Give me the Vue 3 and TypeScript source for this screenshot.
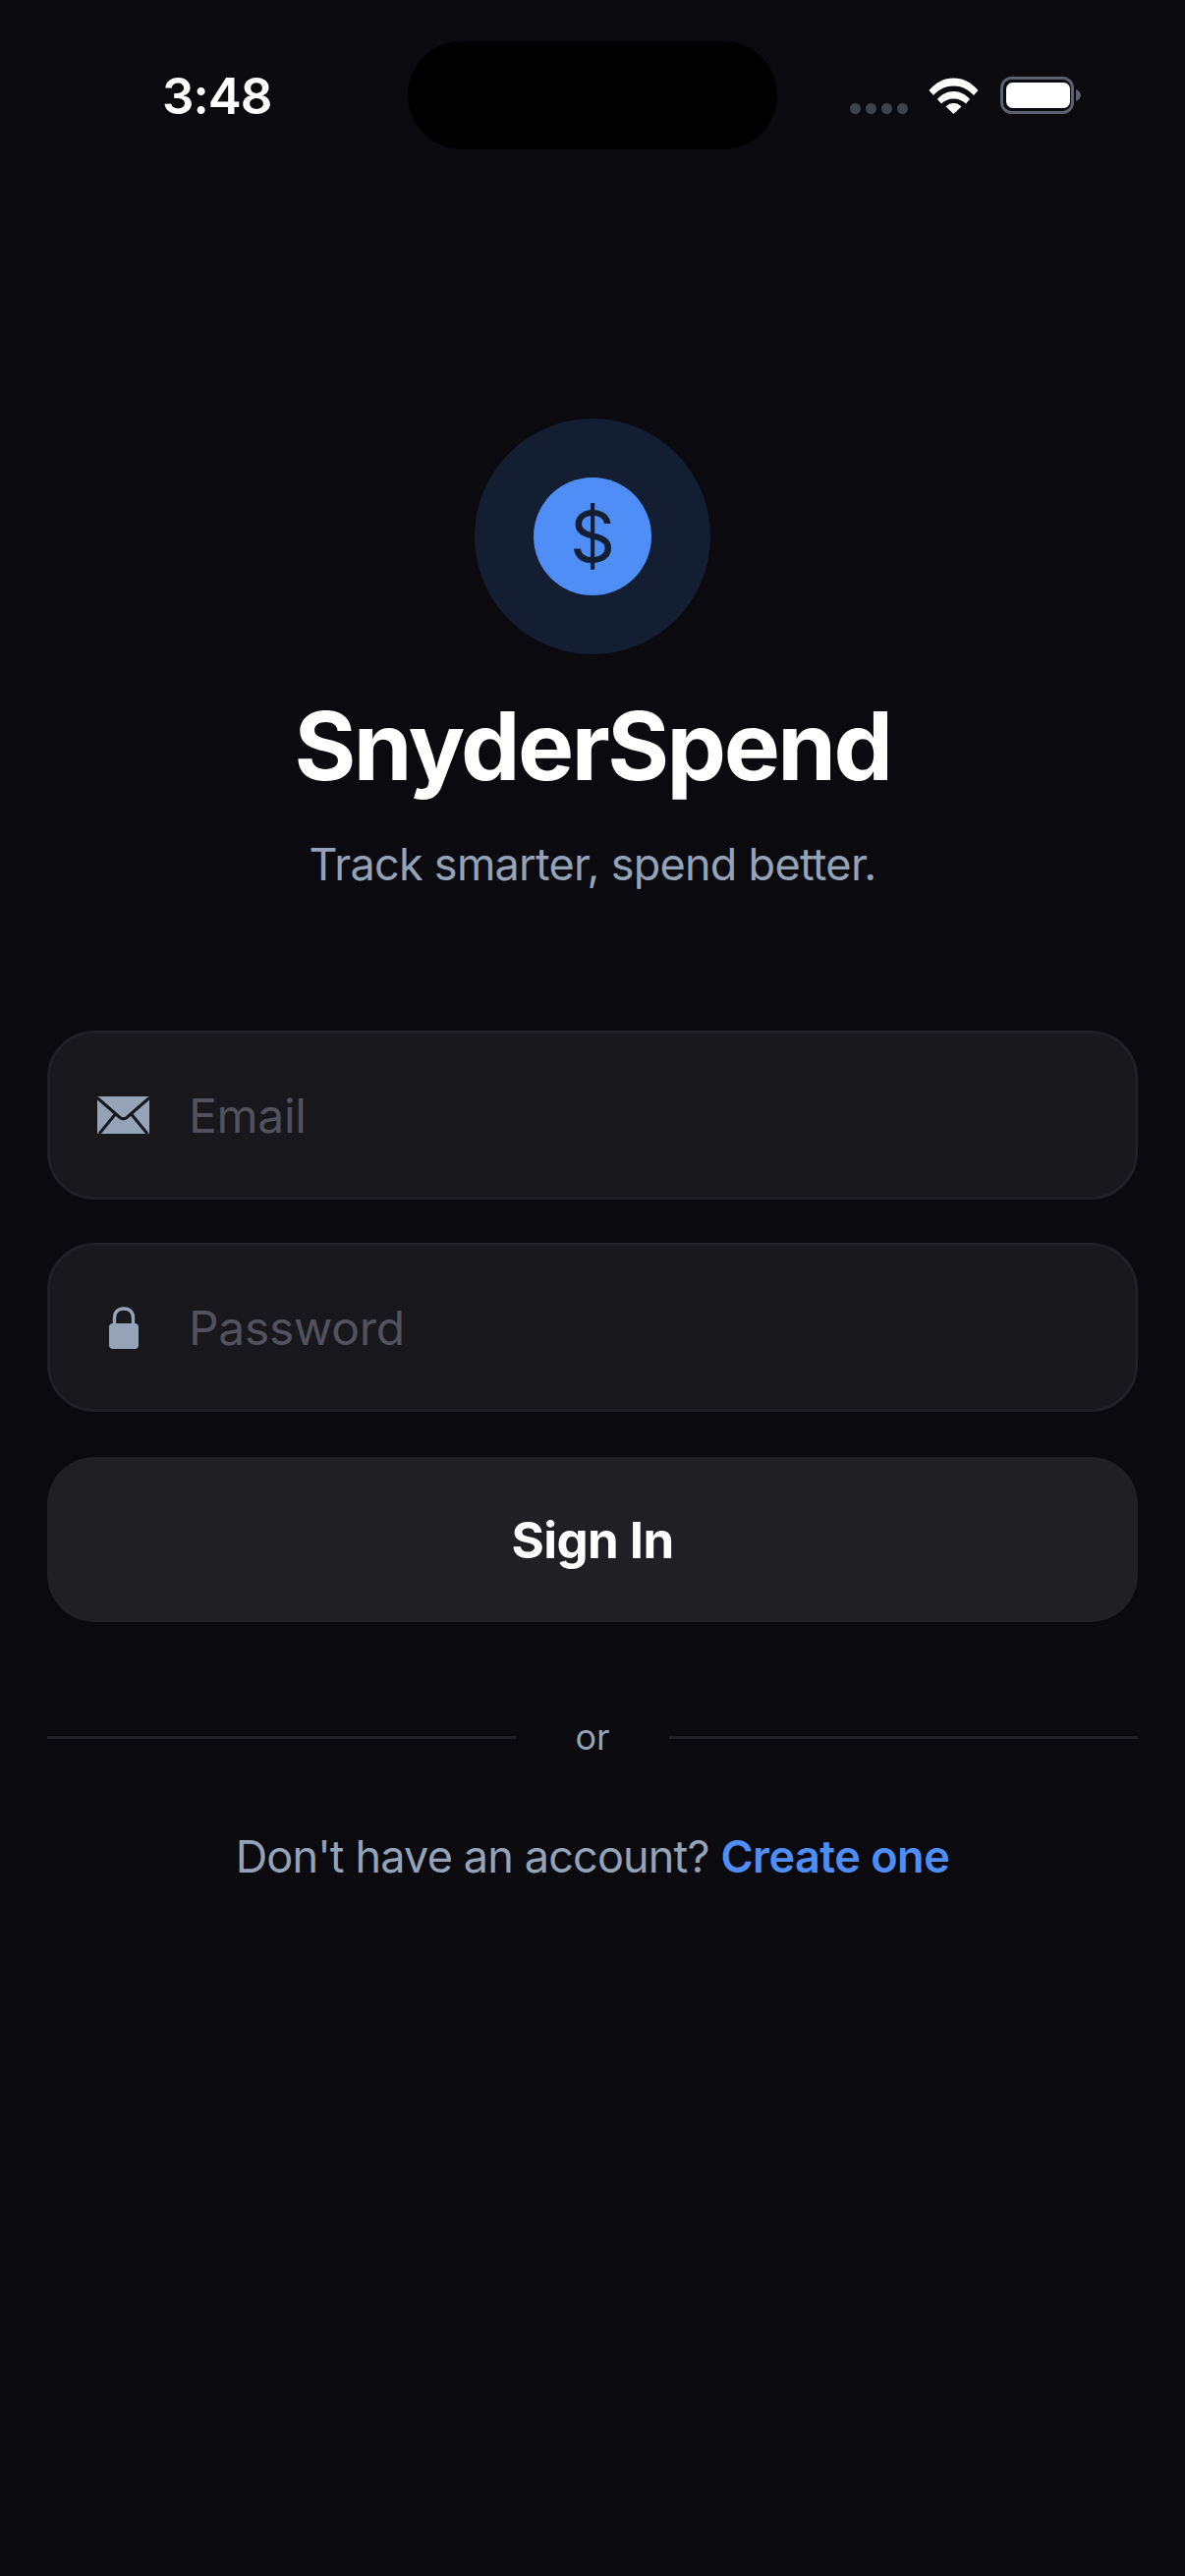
<script setup lang="ts">
const time = '3:48'
const dots = [0, 1, 2, 3]
</script>

<template>
  <div class="screen">
    <div class="status-bar">
      <div class="time">{{ time }}</div>
      <div class="island"></div>
      <div class="status-icons">
        <div class="signal">
          <span v-for="d in dots" :key="d" class="dot"></span>
        </div>
        <svg class="wifi" width="51" height="37" viewBox="0 0 51 37" fill="#fff">
          <path d="M.5 13C7 5 16 .5 25.5.5S44 5 50.5 13L46 18C40 11.5 33 8.5 25.5 8.5S11 11.5 5 18Z" />
          <path d="M9 22C13 17 19 14 25.500 14S38 17 42 22L38 26.500C35 23.500 30.500 21.500 25.500 21.500S16 23.500 13 26.500Z" />
          <path d="M25.500 26C28.500 26 31 27 33.500 29.500L25.500 37L17.500 29.500C20 27 22.500 26 25.500 26Z" />
        </svg>
        <svg class="battery" width="82" height="38" viewBox="0 0 82 38">
          <rect x="1.500" y="1.500" width="72" height="35" rx="10" fill="none" stroke="#5b606c" stroke-width="3" />
          <rect x="6" y="6" width="65" height="26" rx="6.500" fill="#fff" />
          <path d="M77 13C80 14 82 16.500 82 19S80 24 77 25Z" fill="#5b606c" />
        </svg>
      </div>
    </div>

    <div class="brand">
      <div class="logo">
        <div class="logo-inner">$</div>
      </div>
      <h1 class="title">SnyderSpend</h1>
      <p class="tagline">Track smarter, spend better.</p>
    </div>

    <form class="form" @submit.prevent>
      <label class="field">
        <span class="field-icon">
          <svg class="mail" width="53" height="38" viewBox="0 0 53 38">
            <rect width="53" height="38" rx="1.500" fill="#94a3b8" />
            <path d="M0 1.500L23 21.500Q26.500 24 30 21.500L53 1.500M2 38L18 18.500M51 38L35 18.500" fill="none" stroke="#17171c" stroke-width="3" />
          </svg>
        </span>
        <input class="field-input" type="email" placeholder="Email" />
      </label>
      <label class="field">
        <span class="field-icon">
          <svg width="30" height="43" viewBox="0 0 30 43">
            <path d="M5.500 19V11.500C5.500 5.500 9 2 15 2S24.500 5.500 24.500 11.500V19" fill="none" stroke="#94a3b8" stroke-width="3.400" />
            <rect y="17" width="30" height="26" rx="4" fill="#94a3b8" />
          </svg>
        </span>
        <input class="field-input" type="password" placeholder="Password" />
      </label>
      <button class="submit" type="submit">Sign In</button>
    </form>

    <div class="divider">
      <span class="line"></span>
      <span class="or">or</span>
      <span class="line"></span>
    </div>

    <p class="footer">Don't have an account? <a class="link">Create one</a></p>
  </div>
</template>

<style>
html,
body {
  margin: 0;
  background: #0a0a0f;
}
</style>

<style scoped>
.screen {
  width: 1206px;
  height: 2622px;
  box-sizing: border-box;
  padding: 42px 48px 0;
  overflow: hidden;
  background: #0a0a0f;
  font-family: Inter, "Liberation Sans", sans-serif;
  display: flex;
  flex-direction: column;
}

.status-bar {
  display: flex;
  align-items: flex-start;
  height: 110px;
  padding-left: 117px;
}

.time {
  width: 250px;
  margin-top: 26px;
  color: #fff;
  font-size: 51px;
  font-weight: 600;
  line-height: 60px;
  letter-spacing: -1px;
}

.island {
  width: 376px;
  height: 110px;
  border-radius: 55px;
  background: #000;
}

.status-icons {
  display: flex;
  align-items: flex-end;
  margin-top: 36px;
  margin-left: 74px;
}

.signal {
  display: flex;
  gap: 5px;
}

.dot {
  width: 11px;
  height: 11px;
  border-radius: 50%;
  background: #3f434e;
}

.wifi {
  margin-left: 21px;
}

.battery {
  margin-left: 22px;
}

.brand {
  display: flex;
  flex-direction: column;
  align-items: center;
  margin-top: 274px;
}

.logo {
  width: 240px;
  height: 240px;
  border-radius: 50%;
  background: #141e33;
  display: flex;
  align-items: center;
  justify-content: center;
}

.logo-inner {
  width: 120px;
  height: 120px;
  border-radius: 50%;
  background: #4f8ef7;
  color: #141e33;
  font-size: 72px;
  line-height: 120px;
  text-align: center;
}

.title {
  margin: 35px 0 0;
  color: #fff;
  font-size: 96px;
  font-weight: 700;
  line-height: 116px;
  letter-spacing: -2.5px;
}

.tagline {
  margin: 36px 0 0;
  color: #94a3b8;
  font-size: 45px;
  font-weight: 380;
  line-height: 54px;
  letter-spacing: -0.73px;
}

.form {
  display: flex;
  flex-direction: column;
  gap: 44px;
  margin-top: 142px;
}

.field {
  display: flex;
  align-items: center;
  height: 172px;
  box-sizing: border-box;
  padding-left: 47px;
  border: 3px solid #1f1f25;
  border-radius: 48px;
  background: #17171c;
}

.field-icon {
  width: 56px;
  margin-right: 38px;
  display: flex;
  justify-content: center;
}

.mail {
  margin-right: 2px;
}

.field-input {
  flex: 1;
  min-width: 0;
  padding: 0;
  border: none;
  outline: none;
  background: transparent;
  color: #fff;
  font-family: inherit;
  font-size: 48px;
  letter-spacing: -0.3px;
}

.field-input::placeholder {
  color: #52525e;
  opacity: 1;
}

.submit {
  height: 168px;
  margin-top: 2px;
  border: none;
  border-radius: 48px;
  background: #1f1f24;
  color: #fff;
  font-family: inherit;
  font-size: 51px;
  font-weight: 700;
  letter-spacing: -0.6px;
}

.divider {
  display: flex;
  align-items: center;
  margin-top: 94px;
}

.line {
  flex: 1;
  height: 3px;
  background: #1f1f25;
}

.or {
  width: 156px;
  color: #94a3b8;
  font-size: 36px;
  font-weight: 380;
  line-height: 46px;
  text-align: center;
}

.footer {
  margin: 72px 0 0;
  color: #94a3b8;
  font-size: 45px;
  font-weight: 380;
  line-height: 54px;
  letter-spacing: -0.85px;
  text-align: center;
}

.link {
  color: #4f8ef7;
  font-weight: 600;
  letter-spacing: -0.5px;
}
</style>
